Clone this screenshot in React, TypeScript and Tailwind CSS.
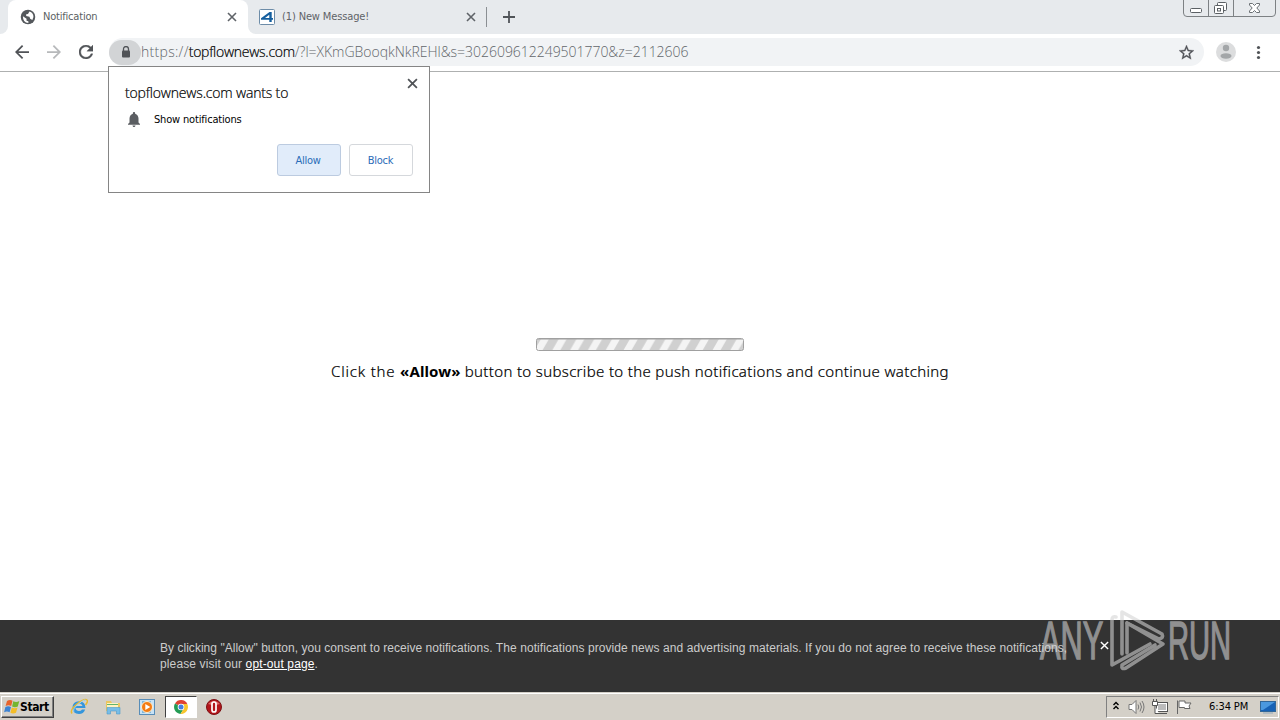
import { ReactNode } from 'react';

const UI_FONT = "font-['DejaVu_Sans_Condensed','DejaVu_Sans',sans-serif] [font-stretch:condensed]";

function CloseIcon({ className }: { className?: string }) {
  return (
    <svg className={className} viewBox="0 0 10 10" fill="none" stroke="currentColor" strokeWidth="1.6">
      <path d="M1 1l8 8M9 1L1 9" />
    </svg>
  );
}

function GlobeIcon() {
  return (
    <svg className="w-4 h-4 shrink-0" viewBox="1 1 22 22">
      <circle cx="12" cy="12" r="10" fill="#54585c" />
      <path d="M5 11l5 3.500v2.500l2.500 1v2.200Q5 20 5 11zM14 4.300Q19.500 6 19.500 12l-1.500 4-3-1.500-1-3-4.500-1V8.300L12 8z" fill="#fff" />
    </svg>
  );
}

function WindowControls() {
  return (
    <div className="absolute left-[1183px] top-[-1px] w-[93px] h-[18px] border border-[#7d8184] rounded-b-[4px] flex">
      <div className="w-[25px] border-r border-[#7d8184]">
        <svg className="block w-6 h-4" viewBox="0 0 24 16" fill="#fff" stroke="#5b6064">
          <rect x="6.5" y="8.5" width="11" height="4" rx="1" />
        </svg>
      </div>
      <div className="w-[25px] border-r border-[#7d8184]">
        <svg className="block w-6 h-4" viewBox="0 0 24 16" fill="#fff" stroke="#5b6064">
          <rect x="8.5" y="2.5" width="9" height="8" rx="1" />
          <rect x="5.5" y="5.5" width="9" height="8" rx="1" />
          <rect x="8.5" y="8.5" width="3" height="2.5" />
        </svg>
      </div>
      <div className="flex-1">
        <svg className="block w-[41px] h-4" viewBox="0 0 41 16" fill="#fff" stroke="#6b7074">
          <path d="M15.500 3.500h3l2 2 2-2h3v1.500l-2.700 3 2.700 3v1.500h-3l-2-2-2 2h-3V11l2.700-3-2.700-3z" />
        </svg>
      </div>
    </div>
  );
}

function TabStrip() {
  return (
    <div className={`flex h-[34px] bg-[#e7eaed] text-[11px] ${UI_FONT}`}>
      <div className="w-2 bg-white">
        <div className="h-full bg-[#e7eaed] rounded-br-lg" />
      </div>
      <div className="w-[240px] bg-white rounded-t-lg flex items-center pl-3 pr-[11px] text-[#5b5f63]">
        <GlobeIcon />
        <span className="ml-[7px] mt-px flex-1 tracking-[-0.2px]">Notification</span>
        <CloseIcon className="w-[10px] h-[10px] text-[#5f6368]" />
      </div>
      <div className="w-[240px] bg-white">
        <div className="h-full bg-[#e7eaed] rounded-bl-lg flex items-center pl-[11px] pr-[12px] text-[#5f6368]">
          <svg className="w-4 h-4 shrink-0" viewBox="0 0 16 16">
            <rect x=".5" y=".5" width="15" height="15" rx="1" fill="#fff" stroke="#6d8ca8" />
            <path d="M10.500 3h2.200v6h1.300v1.700h-1.300V13h-2.400v-2.300H2V9.200zM10.300 5.700L6 9h4.300z" fill="#155f9f" />
          </svg>
          <span className="ml-[7px] mt-px flex-1 tracking-[-0.13px]">(1) New Message!</span>
          <CloseIcon className="w-[10px] h-[10px]" />
        </div>
      </div>
      <div className="w-px h-5 mt-[7px] -ml-[2px] bg-[#8b8f93]" />
      <svg className="w-3 h-3 ml-4 mt-[11px]" viewBox="0 0 12 12" stroke="#505458" strokeWidth="1.8">
        <path d="M6 0v12M0 6h12" />
      </svg>
      <WindowControls />
    </div>
  );
}

function Toolbar() {
  return (
    <div className="flex items-center h-[38px] bg-white border-b border-[#aeb0b0] pb-px">
      <svg className="w-[14px] h-[14px] ml-[15px]" viewBox="4 4 16 16" fill="#505357">
        <path d="M20 11H7.83l5.59-5.59L12 4l-8 8 8 8 1.410-1.410L7.830 13H20v-2z" />
      </svg>
      <svg className="w-[14px] h-[14px] ml-[18px]" viewBox="4 4 16 16" fill="#b7b9bb">
        <path d="M12 4l-1.410 1.410L16.170 11H4v2h12.170l-5.580 5.590L12 20l8-8z" />
      </svg>
      <svg className="w-[14px] h-[14px] ml-[18px]" viewBox="4 4 16 16" fill="#505357" stroke="#505357" strokeWidth=".4">
        <path d="M17.65 6.35C16.2 4.9 14.21 4 12 4c-4.42 0-7.99 3.58-7.99 8s3.57 8 7.99 8c3.73 0 6.84-2.55 7.73-6h-2.08c-.82 2.33-3.04 4-5.65 4-3.31 0-6-2.69-6-6s2.69-6 6-6c1.66 0 3.14.69 4.22 1.78L13 11h7V4l-2.35 2.35z" />
      </svg>
      <div className="flex items-center w-[1095px] h-[28px] ml-[16px] rounded-full bg-[#f1f3f5]">
        <div className="w-8 h-[25px] rounded-full bg-[#d2d4d6] flex items-center justify-center pl-[2px]">
          <svg className="w-[10px] h-3" viewBox="0 0 10 12" fill="#505357">
            <rect x="1" y="4.5" width="8" height="7" rx="1" />
            <path d="M2.500 5V3a2.500 2.500 0 015 0v2" fill="none" stroke="#505357" strokeWidth="1.3" />
          </svg>
        </div>
        <div className="flex-1 font-['Open_Sans',sans-serif] font-light text-[14px] leading-[18px] text-[#62666a] whitespace-nowrap">
          <span className="tracking-[0.3px]">https://</span>
          <span className="text-black tracking-[-0.27px] [-webkit-text-stroke:0.2px]">topflownews.com</span>
          <span className="tracking-[-0.03px]">/?l=XKmGBooqkNkREHl&amp;s=302609612249501770&amp;z=2112606</span>
        </div>
        <svg className="w-[15px] h-[15px] mr-[10px]" viewBox="2 2 20 20" fill="#505357" stroke="#505357" strokeWidth=".4">
          <path d="M22 9.24l-7.19-.62L12 2 9.19 8.63 2 9.24l5.46 4.73L5.82 21 12 17.27 18.18 21l-1.63-7.03L22 9.24zM12 15.4l-3.76 2.27 1-4.28-3.32-2.88 4.38-.38L12 6.1l1.71 4.04 4.38.38-3.32 2.88 1 4.28L12 15.4z" />
        </svg>
      </div>
      <svg className="w-5 h-5 ml-3" viewBox="0 0 20 20">
        <circle cx="10" cy="10" r="10" fill="#dcddde" />
        <circle cx="10" cy="6" r="3.2" fill="#a3a6a8" />
        <ellipse cx="10" cy="14" rx="5.5" ry="2.7" fill="#a3a6a8" />
      </svg>
      <svg className="w-4 h-4 ml-[14px]" viewBox="0 0 16 16" fill="#505357">
        <circle cx="8.5" cy="3.5" r="1.6" />
        <circle cx="8.5" cy="8.5" r="1.6" />
        <circle cx="8.5" cy="13.5" r="1.6" />
      </svg>
    </div>
  );
}

function PermissionPrompt() {
  return (
    <div className="absolute left-[108px] top-[66px] w-[322px] h-[127px] bg-white border border-[#858585] pl-4 pr-4 pt-[17px] text-black">
      <CloseIcon className="absolute right-[11px] top-[11px] w-[11px] h-[11px] text-[#505357]" />
      <div className="font-['Open_Sans',sans-serif] font-light text-[14px] leading-[18px] whitespace-nowrap [-webkit-text-stroke:0.2px]">
        <span className="tracking-[-0.17px]">topflownews.com wants to</span>
      </div>
      <div className={`flex items-center mt-[8px] h-[18px] text-[11px] ${UI_FONT}`}>
        <svg className="w-[12px] h-[15px] ml-[3px]" viewBox="4 2.5 16 19.5" preserveAspectRatio="none" fill="#5b5e62">
          <path d="M12 22c1.1 0 2-.9 2-2h-4c0 1.1.89 2 2 2zm6-6v-5c0-3.07-1.64-5.64-4.5-6.32V4c0-.83-.67-1.5-1.5-1.5s-1.5.67-1.5 1.5v.68C7.63 5.36 6 7.92 6 11v5l-2 2v1h16v-1l-2-2z" />
        </svg>
        <span className="ml-[14px] mt-[2px] tracking-[-0.17px]">Show notifications</span>
      </div>
      <div className={`flex justify-end gap-2 mt-[16px] text-[11px] text-[#2a6cb8] tracking-[-0.25px] ${UI_FONT}`}>
        <button className="w-16 h-8 rounded-[3px] border border-[#bccbe0] bg-[#e1ecfa] pr-[2px] pt-[2px]">Allow</button>
        <button className="w-16 h-8 rounded-[3px] border border-[#d5d8dc] bg-white pr-px pt-[2px]">Block</button>
      </div>
    </div>
  );
}

function LoadingBar() {
  return (
    <svg className="block w-[208px] h-[13px]" viewBox="0 0 208 13">
      <defs>
        <pattern id="stripes" width="17.8" height="13" patternUnits="userSpaceOnUse" x="-2">
          <rect width="17.8" height="13" fill="#d0d0d0" />
          <path d="M0 13L7.500 0h8L8 13z" fill="#f4f4f4" />
        </pattern>
      </defs>
      <rect x=".5" y=".5" width="207" height="12" rx="2" fill="url(#stripes)" stroke="#a0a0a0" />
      <path d="M2 1.500h204" stroke="#aaa" strokeOpacity=".6" />
    </svg>
  );
}

function Page() {
  return (
    <div className="flex-1 bg-white flex flex-col items-center pt-[266px]">
      <LoadingBar />
      <p className="mt-[9px] font-['Noto_Sans',sans-serif] font-light text-[15px] leading-[22px] text-black whitespace-nowrap tracking-[0.34px] [-webkit-text-stroke:0.2px]">
        <span className="tracking-[0.8px]">Click the </span>
        <b className="font-bold tracking-[0.1px] [-webkit-text-stroke:0px]">«Allow»</b> button to subscribe to the push
        notifications and continue watching
      </p>
    </div>
  );
}

function ConsentBar() {
  return (
    <div className="h-[72px] bg-[#333] pl-[160px] pt-5 flex items-start font-['Liberation_Sans',sans-serif] text-[12px] leading-4 text-[#ccc]">
      <p className="w-[912px] whitespace-nowrap tracking-[0.077px]">
        <span className="tracking-[0.03px]">By clicking "Allow" button, you consent to receive notifications.</span> The
        notifications provide news and advertising materials. If you do not agree to receive these notifications,
        <br />
        <span className="tracking-[0.13px]">
          please visit our <span className="underline text-white">opt-out page</span>.
        </span>
      </p>
      <CloseIcon className="w-[9px] h-[9px] ml-[28px] mt-[1px] text-white" />
    </div>
  );
}

function Watermark() {
  return (
    <svg className="absolute left-[1036px] top-[606px] w-[240px] h-[70px] overflow-visible" viewBox="0 0 240 70" opacity="0.58">
      <g
        fill="#d4d4d4"
        stroke="#d4d4d4"
        strokeWidth="1.4"
        fontFamily="'Liberation Sans',sans-serif"
        fontSize="53"
      >
        <text transform="translate(4 53) scale(.58 1)">ANY</text>
        <text transform="translate(132 53) scale(.55 1)">RUN</text>
      </g>
      <g fill="none" stroke="#d4d4d4" strokeWidth="3.6" strokeLinejoin="round" strokeLinecap="round">
        <path d="M80 11q-4-1-4 3v45l38-21" />
        <path d="M86 48V6l40 22q2 4-3 5L91 17v30" />
        <path d="M91 17l36 21-37 24q-5 2-4-3l33-20" />
      </g>
    </svg>
  );
}

function TaskIcon({ children }: { children: ReactNode }) {
  return (
    <div className="w-[34px] h-[22px] flex items-center justify-center">
      <svg className="w-[18px] h-[18px]" viewBox="0 0 18 18">{children}</svg>
    </div>
  );
}

function Taskbar() {
  return (
    <div className="h-7 bg-[#d4d0c8] shadow-[inset_0_1px_0_#d4d0c8,inset_0_2px_0_#fff] flex items-center pt-[1px] text-black">
      <div className={`w-[53px] h-[22px] ml-px mt-px flex items-center bg-[#d4d0c8] border border-t-white border-l-white border-r-[#404040] border-b-[#404040] shadow-[inset_-1px_-1px_0_#808080] text-[12px] font-bold ${UI_FONT}`}>
        <svg className="w-4 h-4 ml-[2px] shrink-0" viewBox="0 0 16 16">
          <path d="M3 2q3-2 5.500-.2L7.200 7Q4.500 5.500 1.600 7z" fill="#e8632a" />
          <path d="M9.300 2.300q3 1.500 6-.2L13.800 7.500q-2.800 1.600-5.700 0z" fill="#75b52e" />
          <path d="M1.400 8Q4.200 6.500 7 8l-1.400 5.200q-2.600-1.600-5.500 0z" fill="#3d83d2" />
          <path d="M7.800 8.500q2.800 1.600 5.700.1L12 13.800q-3 1.500-5.600 0z" fill="#f4bd27" />
        </svg>
        <span className="tracking-[-0.4px]">Start</span>
      </div>
      <div className="flex items-center ml-[8px]">
        <TaskIcon>
          <path d="M15.500 10H5.500q.5 3 3.500 3 2 0 3-1.500h3.200Q13.500 16 9 16q-6.500-.5-6.500-6.500T9 3.200q6.500.3 6.500 6.800z" fill="#3596dc" />
          <path d="M5.600 8h6.800Q12 5.500 9 5.500T5.600 8z" fill="#d4d0c8" />
          <path d="M2 15.500Q-.5 12 7 6t10-4q1.500 1-1.500 5" fill="none" stroke="#e9b92f" strokeWidth="1.500" />
          <path d="M4 13.500Q2 11 9 5.500t6.500-2.700" fill="none" stroke="#9ed5f7" strokeWidth="1" />
        </TaskIcon>
        <TaskIcon>
          <path d="M2 3h5l1 2h8v8H2z" fill="#ecc65f" />
          <path d="M3 5h11v6H3z" fill="#fff3c0" />
          <path d="M3 6.500h11" stroke="#63b46d" />
          <path d="M3 16V9.500h13V16h-3.500v-3h-6v3z" fill="#77bde7" stroke="#4d9aca" strokeWidth=".6" />
        </TaskIcon>
        <TaskIcon>
          <rect x="1.500" y="1.500" width="15" height="15" fill="#c8e2f5" stroke="#588db8" />
          <path d="M4 3h9v12H4z" fill="#81b8dc" />
          <circle cx="9" cy="9" r="5.500" fill="#f47c13" stroke="#fff0d2" />
          <path d="M7.300 6l5 3-5 3z" fill="#fff" />
        </TaskIcon>
        <div className="bg-white border border-t-[#404040] border-l-[#404040] border-r-white border-b-white w-8 h-[22px] ml-px flex items-center justify-center">
          <svg className="w-[14px] h-[14px]" viewBox="0 0 14 14">
            <path d="M7 7L1 3.500A7 7 0 0113.300 4z" fill="#df4232" />
            <path d="M7 7L1 3.500A7 7 0 006.500 14l3.300-5.500z" fill="#249c55" />
            <path d="M7 7l2.800 1.700L6.500 14A7 7 0 0013.300 4H7z" fill="#f8c52c" />
            <circle cx="7" cy="7" r="3.300" fill="#fff" />
            <circle cx="7" cy="7" r="2.500" fill="#447ee0" />
          </svg>
        </div>
        <TaskIcon>
          <circle cx="9" cy="9" r="7.500" fill="#b3161b" stroke="#7d1014" />
          <path d="M3 6q6-6 12 0-6 2-12 0z" fill="#df6b6b" />
          <rect x="7" y="4" width="4" height="10" rx="2" fill="#b3161b" stroke="#fff" strokeWidth="1.700" />
        </TaskIcon>
      </div>
      <div className={`ml-auto w-[173px] h-[22px] mr-px mt-px border border-t-[#808080] border-l-[#808080] border-r-white border-b-white flex items-center text-[11px] ${UI_FONT}`}>
        <svg className="w-[8px] h-[9px] ml-[5px] mb-1" viewBox="0 0 8 9" fill="none" stroke="#000" strokeWidth="1.400">
          <path d="M1.500 4L4 1.500 6.500 4M1.500 8L4 5.500 6.500 8" />
        </svg>
        <svg className="w-[17px] h-4 ml-[8px]" viewBox="0 0 17 16" fill="#fff" stroke="#777">
          <path d="M1 5.500h3l4-4v13l-4-4H1z" />
          <path d="M10 5.500q1.500 2.500 0 5M12 3.500q3 4.500 0 9M14 2q4 6 0 12" fill="none" />
        </svg>
        <svg className="w-4 h-4 ml-[7px]" viewBox="0 0 16 16" fill="#fff" stroke="#555">
          <rect x="4.500" y="3.500" width="11" height="9" />
          <path d="M6 5h8v6H6z" fill="#bbb" stroke="none" />
          <path d="M7 14.500h8" />
          <path d="M.5 2.500h5v4h-5zM1.500 2.500V0M4.500 2.500V0M3 6.500v8h4" />
        </svg>
        <svg className="w-4 h-4 ml-[8px]" viewBox="0 0 16 16" fill="#fff" stroke="#666">
          <path d="M1.500 15V1.500M3 2h6v2h6l-2 3 1 2.500H8.500v-1H3z" />
        </svg>
        <span className="ml-[17px] mt-px w-[44px] whitespace-nowrap tracking-[-0.1px]">6:34 PM</span>
        <svg className="w-4 h-[13px] ml-[7px]" viewBox="0 0 16 13">
          <rect x=".5" y=".5" width="15" height="10" fill="#1762b5" stroke="#326798" />
          <path d="M1 1h14L3 9H1z" fill="#4b99df" />
          <path d="M3 12h10" stroke="#8fa7bb" />
        </svg>
      </div>
    </div>
  );
}

export default function App() {
  return (
    <div className="relative w-[1280px] h-[720px] overflow-hidden flex flex-col bg-white">
      <TabStrip />
      <Toolbar />
      <Page />
      <ConsentBar />
      <Taskbar />
      <PermissionPrompt />
      <Watermark />
    </div>
  );
}
